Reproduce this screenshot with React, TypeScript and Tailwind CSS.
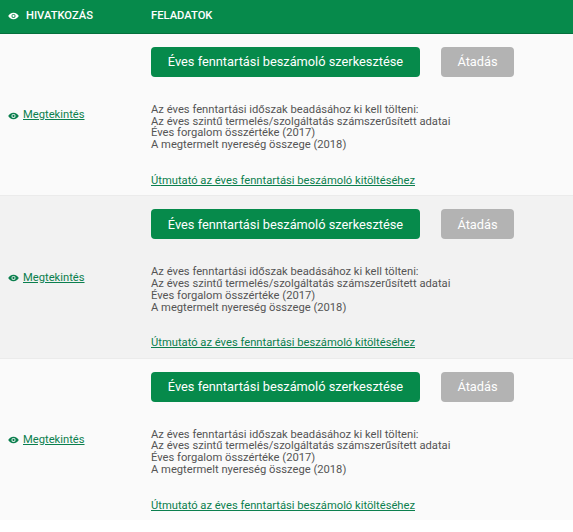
const rows = [
  { id: 1, bg: "bg-[#fafafa]" },
  { id: 2, bg: "bg-[#f2f2f2]" },
  { id: 3, bg: "bg-[#fafafa]" },
];

function EyeIcon({ className }: { className?: string }) {
  return (
    <svg viewBox="0 0 24 16" className={className} fill="currentColor">
      <path
        fillRule="evenodd"
        d="M12 1C6.8 1 2.600 4 .5 8c2.100 4 6.300 7 11.500 7s9.400-3 11.500-7C21.400 4 17.200 1 12 1zm0 11.500A4.500 4.500 0 1 1 12 3.500a4.500 4.500 0 0 1 0 9zM12 5.500a2.500 2.500 0 1 0 0 5 2.500 2.500 0 0 0 0-5z"
      />
    </svg>
  );
}

function TaskRow({ bg }: { bg: string }) {
  return (
    <div className={`flex h-[162.400px] last:h-[161px] border-b last:border-b-0 border-[#ebebeb] ${bg}`}>
      <div className="w-[151px] pl-2 pt-[2px] last:pt-0 flex items-center">
        <a href="#" className="flex items-center text-[11.200px] text-[#0b7f4e] underline">
          <EyeIcon className="w-[11px] h-[8px] mr-1 text-[#0b7f4e]" />
          Megtekintés
        </a>
      </div>
      <div className="flex-1 pt-[13px]">
        <div className="flex gap-[21px]">
          <button className="w-[269px] h-[30px] rounded bg-[#068a4b] text-white text-[12.800px]">
            Éves fenntartási beszámoló szerkesztése
          </button>
          <button className="w-[73px] h-[30px] rounded bg-[#b3b3b3] text-white text-[12.800px]">
            Átadás
          </button>
        </div>
        <div className="mt-[27px] text-[11.200px] leading-[11.700px] text-[#555555]">
          <p>Az éves fenntartási időszak beadásához ki kell tölteni:</p>
          <p>Az éves szintű termelés/szolgáltatás számszerűsített adatai</p>
          <p>Éves forgalom összértéke (2017)</p>
          <p>A megtermelt nyereség összege (2018)</p>
        </div>
        <a href="#" className="block mt-[22px] text-[11.200px] text-[#0b7f4e] underline">
          Útmutató az éves fenntartási beszámoló kitöltéséhez
        </a>
      </div>
    </div>
  );
}

export default function App() {
  return (
    <div className="w-[573px] h-[532px] overflow-hidden bg-white font-['Roboto',sans-serif]">
      <div className="flex items-center h-[34px] bg-[#068a4b] border-b border-[#05703d] text-white text-[11.200px] font-medium">
        <div className="w-[151px] pl-2 flex items-center">
          <EyeIcon className="w-[11px] h-[8px] mr-[7px]" />
          HIVATKOZÁS
        </div>
        <div>FELADATOK</div>
      </div>
      {rows.map((row) => (
        <TaskRow key={row.id} bg={row.bg} />
      ))}
    </div>
  );
}
